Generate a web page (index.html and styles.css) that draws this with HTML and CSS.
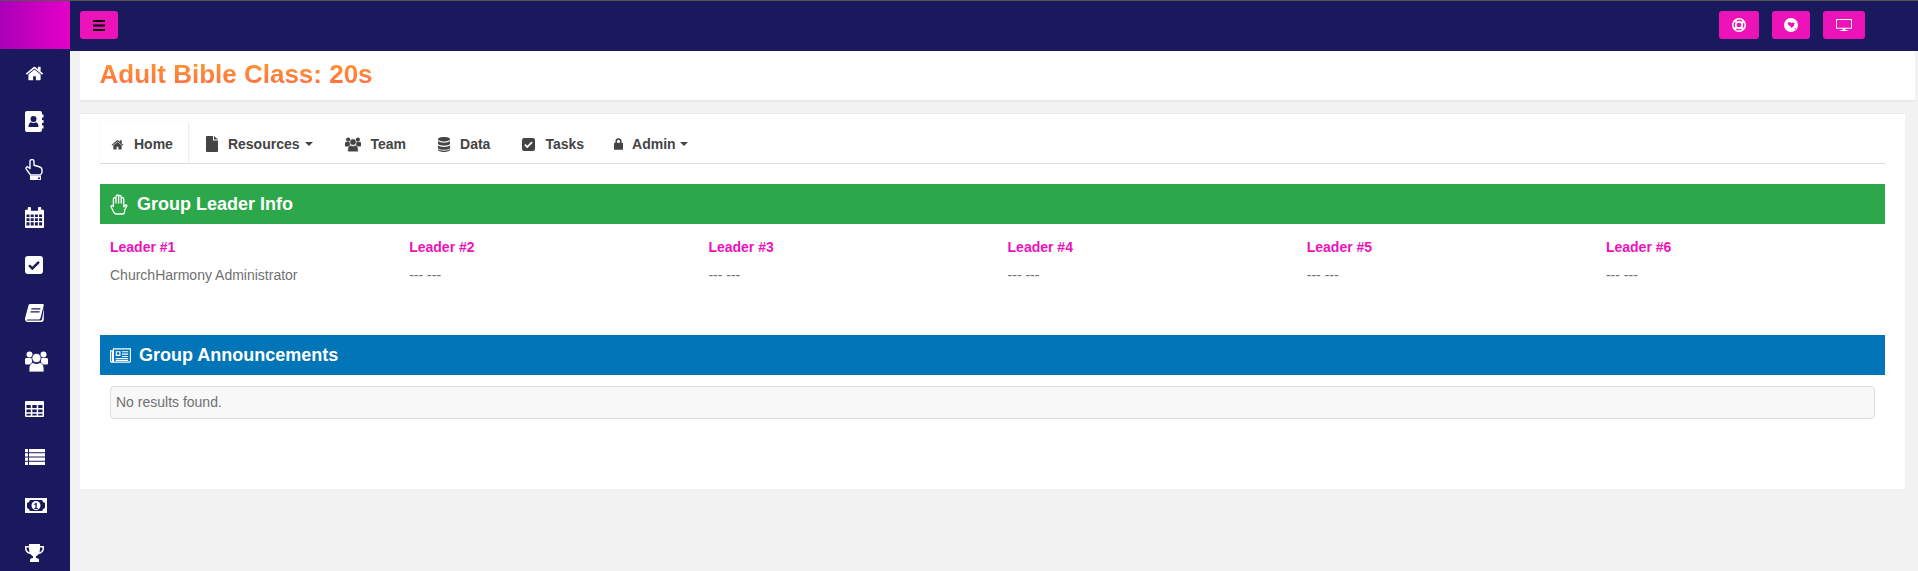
FILE: index.html
```html
<!DOCTYPE html>
<html lang="en">
<head>
<meta charset="utf-8">
<title>Adult Bible Class: 20s</title>
<link rel="stylesheet" href="styles.css">
</head>
<body>
<svg class="defs" width="0" height="0" aria-hidden="true">
  <symbol id="i-home" viewBox="0 128 1792 1440"><path d="M1472 992v480q0 26-19 45t-45 19h-384v-384h-256v384h-384q-26 0-45-19t-19-45v-480q0-1 .5-3t.5-3l575-474 575 474q1 2 1 6zm223-69l-62 74q-8 9-21 11h-3q-13 0-21-7l-692-577-692 577q-12 8-24 7-13-2-21-11l-62-74q-8-10-7-23.500t11-21.500l719-599q32-26 76-26t76 26l244 204v-195q0-14 9-23t23-9h192q14 0 23 9t9 23v408l219 182q10 8 11 21.500t-7 23.500z"/></symbol>
  <symbol id="i-file" viewBox="0 0 12 16"><path d="M0 1a1 1 0 011-1h6v4.500h5V15a1 1 0 01-1 1H1a1 1 0 01-1-1zM8 0l4 3.500H8z"/></symbol>
  <symbol id="i-users" viewBox="0 0 23 21"><circle cx="4.500" cy="3.500" r="3"/><circle cx="18.500" cy="3.500" r="3"/><path d="M0 8.500c0-1 .6-1.500 1.500-1.500h5.500v6.500H1.500C.6 13.500 0 13 0 12zM23 8.500c0-1-.6-1.500-1.500-1.500H16v6.500h5.500c.9 0 1.500-.5 1.500-1.500z"/><circle class="gap" cx="11.500" cy="7" r="4.600"/><path class="gap" d="M4 21v-4c0-3 2-5 4-5.500 2 1.500 5 1.500 7 0 2 .5 4 2.500 4 5.500v4z"/></symbol>
  <symbol id="i-database" viewBox="0 0 12 15"><path d="M6 0c3.300 0 6 .9 6 2.200S9.300 4.400 6 4.400 0 3.500 0 2.200 2.700 0 6 0zM0 4c1 1.100 3.500 1.700 6 1.700S11 5.100 12 4v2.600C12 7.800 9.300 8.700 6 8.700S0 7.800 0 6.600zM0 8.300c1 1.100 3.500 1.700 6 1.700s5-.6 6-1.700v2.400c0 1.200-2.700 2.100-6 2.100s-6-.9-6-2.100zM0 12c1 1.100 3.500 1.700 6 1.700s5-.6 6-1.700v.8C12 14 9.300 15 6 15s-6-1-6-2.200z"/></symbol>
  <symbol id="i-check" viewBox="0 0 18 18"><path fill-rule="evenodd" d="M3 0h12a3 3 0 013 3v12a3 3 0 01-3 3H3a3 3 0 01-3-3V3a3 3 0 013-3zm4.300 14.200l7.500-7.500-1.700-1.700-5.800 5.800-2.400-2.400-1.700 1.700z"/></symbol>
  <symbol id="i-lock" viewBox="0 0 10 13"><path fill-rule="evenodd" d="M1.600 5V3.400a3.400 3.400 0 016.800 0V5h.6a1 1 0 011 1v6a1 1 0 01-1 1H1a1 1 0 01-1-1V6a1 1 0 011-1zm1.700 0h3.400V3.400a1.700 1.700 0 00-3.400 0z"/></symbol>
  <symbol id="i-bars" viewBox="0 0 12 11"><path d="M0 0h12v2H0zM0 4.500h12v2H0zM0 9h12v2H0z"/></symbol>
  <symbol id="i-ring" viewBox="0 0 16 16"><circle cx="8" cy="8" r="8"/><circle class="cut-stroke" cx="8" cy="8" r="5.500" fill="none" stroke-width="1.500" stroke-dasharray="6 2.640" stroke-dashoffset="3"/><circle class="cut-fill" cx="8" cy="8" r="2.700"/></symbol>
  <symbol id="i-globe" viewBox="0 0 16 16"><circle cx="8" cy="8" r="8"/><path class="cut-fill" d="M4 5.500l3-1 1.200 1.400 2-1 2 1.300-1 2.800-2.700 2.500-1.300-2-2.200-1.500zM12 12l1.800-.6-.6 1.800z"/></symbol>
  <symbol id="i-desktop" viewBox="0 0 16 12"><path fill-rule="evenodd" d="M.5 0h15a.5.5 0 01.5.5v8.700a.5.5 0 01-.5.5H9.300v1.200h2.200v1H4.500v-1h2.200V9.700H.5A.5.5 0 010 9.200V.5A.5.5 0 01.5 0zm.5 1v7.700h14V1z"/></symbol>
  <symbol id="i-contact" viewBox="0 0 19 21"><path fill-rule="evenodd" d="M2 0h13a2 2 0 012 2v1.500h1.500v3H17V9h1.500v3H17v2.500h1.500v3H17V19a2 2 0 01-2 2H2a2 2 0 01-2-2V2a2 2 0 012-2zm6.500 5a3 3 0 100 6 3 3 0 000-6zM3.500 16h10c0-2.800-1-4.500-2.500-4.800-1.500 1-3.500 1-5 0C4.500 11.500 3.500 13.200 3.500 16z"/></symbol>
  <symbol id="i-point" viewBox="0 0 18 21"><path fill="none" stroke="currentColor" stroke-width="1.400" stroke-linejoin="round" d="M5 9.500v-7a2 2 0 014 0v3.800l4.500 1.200c2 .5 3.500 1.500 3.500 3.500v2.500l-1.500 2.500H5.500L1.300 10.200c-1-1.500.8-3 2-2z"/><path fill-rule="evenodd" d="M5 17h11v4H5zm9 1.200a1 1 0 100 2 1 1 0 000-2z"/></symbol>
  <symbol id="i-calendar" viewBox="0 0 19 21"><path fill-rule="evenodd" d="M3.500 0h1.800a.7.700 0 01.7.7v3.100H13V.7a.7.700 0 01.7-.7h1.800a.7.700 0 01.7.7v2h2c.4 0 .8.4.8.8v16.700c0 .4-.4.8-.8.8H.8c-.4 0-.8-.4-.8-.8V3.500c0-.4.4-.8.800-.8h2V.7a.7.700 0 01.7-.7zM1.500 7.500v2.500h3V7.500zm4.200 0v2.500h3V7.500zm4.200 0v2.500h3V7.500zm4.200 0v2.500h3V7.500zM1.500 11.300v2.700h3v-2.700zm4.200 0v2.700h3v-2.700zm4.200 0v2.700h3v-2.700zm4.200 0v2.700h3v-2.700zM1.500 15.300v3.200h3v-3.200zm4.200 0v3.200h3v-3.200zm4.200 0v3.200h3v-3.200zm4.200 0v3.200h3v-3.200z"/></symbol>
  <symbol id="i-book" viewBox="0 0 19 18"><path fill-rule="evenodd" d="M5 0h12.500c1 0 1.500.8 1.200 1.800L15.500 14c-.3 1-1 1.500-2 1.500H3c-1 0-1.500.7-1.300 1h14c.6 0 1-.4 1.200-1L19 4.500l-.3 11.500c-.3 1.200-1 2-2.200 2H2.500C.8 18-.4 16 .1 14L3.300 2C3.600.8 4 0 5 0zm1.500 4.200l-.3 1.200h9l.3-1.200zm-.8 3l-.3 1.200h9l.3-1.200z"/></symbol>
  <symbol id="i-table" viewBox="0 0 19 16"><path fill-rule="evenodd" d="M1 0h17a1 1 0 011 1v14a1 1 0 01-1 1H1a1 1 0 01-1-1V1a1 1 0 011-1zm.5 4v3h4.300V4zm5.800 0v3h4.400V4zm5.900 0v3h4.300V4zM1.500 8.500v2.800h4.300V8.500zm5.800 0v2.800h4.400V8.500zm5.900 0v2.800h4.300V8.500zM1.500 12.700v1.800h4.300v-1.800zm5.800 0v1.800h4.400v-1.800zm5.900 0v1.800h4.300v-1.800z"/></symbol>
  <symbol id="i-list" viewBox="0 0 20 16"><path fill-rule="evenodd" d="M0 0h3v3.300H0zM4 0h16v3.300H4zM0 4.300h3v3.200H0zM4 4.300h16v3.200H4zM0 8.500h3v3.200H0zM4 8.500h16v3.200H4zM0 12.700h3V16H0zM4 12.700h16V16H4z"/></symbol>
  <symbol id="i-money" viewBox="0 0 22 15"><path fill-rule="evenodd" d="M0 0h22v15H0zM5 2C4.500 3.500 3.500 4.500 2 5v5c1.500.5 2.500 1.500 3 3h12c.5-1.500 1.500-2.500 3-3V5c-1.500-.5-2.500-1.500-3-3zM11 3a4.500 4.500 0 110 9 4.500 4.500 0 010-9zM10.800 4.800L9 6.300l.7.8.7-.6V10H9.300v1h3.500v-1h-1.100V4.800z"/></symbol>
  <symbol id="i-trophy" viewBox="0 0 19 18"><path fill-rule="evenodd" d="M4 0h11v2h4v2.500c0 3-2.500 5.200-5.300 5.500-.7 1-1.500 1.700-2.700 2.200V14c1.800 0 3 .7 3 2v2H5v-2c0-1.300 1.200-2 3-2v-1.800c-1.200-.5-2-1.200-2.700-2.200C2.500 9.700 0 7.500 0 4.500V2h4zM1.500 3.500v1c0 1.800 1.300 3.200 3 3.800C4.200 7 4 5.300 4 3.500zm16 0H15c0 1.800-.2 3.500-.5 4.800 1.700-.6 3-2 3-3.800z"/></symbol>
  <symbol id="i-hand" viewBox="0 0 18 21"><path fill="none" stroke="currentColor" stroke-width="1.300" stroke-linejoin="round" stroke-linecap="round" d="M3.400 11V5a1.300 1.300 0 012.600 0v4M6 9V2.300a1.300 1.300 0 012.600 0V9M8.600 9V2.800a1.300 1.300 0 012.600 0V9M11.200 9V5a1.300 1.300 0 012.600 0v7c0 .8.100 1.200.6.6l.8-1.200c.8-1.200 2.100 0 1.400 1.100l-2 3.500v1.800c0 1.300-.9 2.200-2.200 2.200H6.500c-1.300 0-2.200-.7-2.700-1.800l-2.500-5c-.7-1.300.7-2.300 1.600-1.300l.5.6"/></symbol>
  <symbol id="i-news" viewBox="0 0 22 15"><path fill-rule="evenodd" d="M3 0h19v13.500a1.500 1.500 0 01-1.500 1.500H1.500A1.500 1.500 0 010 13.500V2h3zm1.200 1.200v12.600H20.800V1.200zM1.200 3.200v10.300a.3.300 0 00.3.300c.4 0 .5-.2.500-.5V3.200zM6 3h5v5H6zm1.200 1.200v2.600h2.600V4.200zM12.500 3H19v1.200h-6.500zM12.500 5.500H19v1.200h-6.500zM12.500 8H19v1.200h-6.500zM6 10.200h13v1.200H6zM6 12.300h13v.9H6z"/></symbol>
</svg>

<div class="app">
  <aside class="sidebar">
    <div class="logo"></div>
    <nav class="side-nav">
      <a class="side-item"><svg class="si w19 h16"><use href="#i-home"/></svg></a>
      <a class="side-item"><svg class="si w19 h21"><use href="#i-contact"/></svg></a>
      <a class="side-item"><svg class="si w18 h21"><use href="#i-point"/></svg></a>
      <a class="side-item"><svg class="si w19 h21"><use href="#i-calendar"/></svg></a>
      <a class="side-item"><svg class="si w18 h18"><use href="#i-check"/></svg></a>
      <a class="side-item"><svg class="si w19 h18"><use href="#i-book"/></svg></a>
      <a class="side-item"><svg class="si w23 h21"><use href="#i-users"/></svg></a>
      <a class="side-item"><svg class="si w19 h16"><use href="#i-table"/></svg></a>
      <a class="side-item"><svg class="si w20 h16"><use href="#i-list"/></svg></a>
      <a class="side-item"><svg class="si w22 h15"><use href="#i-money"/></svg></a>
      <a class="side-item"><svg class="si w19 h18"><use href="#i-trophy"/></svg></a>
    </nav>
  </aside>

  <div class="main">
    <header class="topbar">
      <button class="btn btn-menu"><svg class="bars"><use href="#i-bars"/></svg></button>
      <div class="top-actions">
        <button class="btn btn-ring"><svg class="ti"><use href="#i-ring"/></svg></button>
        <button class="btn btn-globe"><svg class="ti"><use href="#i-globe"/></svg></button>
        <button class="btn btn-desk"><svg class="ti-d"><use href="#i-desktop"/></svg></button>
      </div>
    </header>

    <div class="page-head"><h1 class="page-title">Adult Bible Class: 20s</h1></div>

    <section class="panel">
      <ul class="tabs">
        <li class="tab tab-active"><svg class="ni w13 h11"><use href="#i-home"/></svg><span>Home</span></li>
        <li class="tab"><svg class="ni w12 h16"><use href="#i-file"/></svg><span>Resources</span><i class="caret"></i></li>
        <li class="tab"><svg class="ni w16 h15"><use href="#i-users"/></svg><span>Team</span></li>
        <li class="tab"><svg class="ni w12 h15"><use href="#i-database"/></svg><span>Data</span></li>
        <li class="tab"><svg class="ni w13 h13"><use href="#i-check"/></svg><span>Tasks</span></li>
        <li class="tab tab-admin"><svg class="ni w9 h12"><use href="#i-lock"/></svg><span>Admin</span><i class="caret"></i></li>
      </ul>

      <h2 class="bar bar-green"><svg class="bi-hand"><use href="#i-hand"/></svg>Group Leader Info</h2>
      <div class="leaders">
        <div class="leader"><div class="leader-label">Leader #1</div><div class="leader-name">ChurchHarmony Administrator</div></div>
        <div class="leader"><div class="leader-label">Leader #2</div><div class="leader-name">--- ---</div></div>
        <div class="leader"><div class="leader-label">Leader #3</div><div class="leader-name">--- ---</div></div>
        <div class="leader"><div class="leader-label">Leader #4</div><div class="leader-name">--- ---</div></div>
        <div class="leader"><div class="leader-label">Leader #5</div><div class="leader-name">--- ---</div></div>
        <div class="leader"><div class="leader-label">Leader #6</div><div class="leader-name">--- ---</div></div>
      </div>

      <h2 class="bar bar-blue"><svg class="bi-news"><use href="#i-news"/></svg>Group Announcements</h2>
      <div class="well">No results found.</div>
    </section>
  </div>
</div>
</body>
</html>
```
FILE: styles.css
```css
* { box-sizing: border-box; }
html, body { margin: 0; }
body {
  height: 571px;
  overflow: hidden;
  background: #f2f2f2;
  color: #707070;
  font: 14px "Liberation Sans", Arial, sans-serif;
}
.defs { position: absolute; }
svg { fill: currentColor; display: block; flex: none; }
.gap { stroke: var(--gap); stroke-width: .8px; }
.cut-fill { fill: #ec13b9; }
.cut-stroke { stroke: #ec13b9; }
.si { --gap: #1a195e; }
.ni { --gap: #fff; }

.app {
  display: flex;
  height: 571px;
  border-top: 1px solid #555;
}

.sidebar {
  width: 70px;
  flex: none;
  background: #1a195e;
  color: #fff;
  overflow: hidden;
}
.logo {
  height: 48px;
  background: linear-gradient(90deg, #aa00b8, #e600c6);
}
.side-item {
  display: flex;
  align-items: center;
  height: 48px;
  padding-left: 25px;
}
.w9 { width: 9px; } .w12 { width: 12px; } .w13 { width: 13px; } .w16 { width: 16px; }
.w18 { width: 18px; } .w19 { width: 19px; } .w20 { width: 20px; } .w22 { width: 22px; } .w23 { width: 23px; }
.h11 { height: 11px; } .h12 { height: 12px; } .h13 { height: 13px; } .h15 { height: 15px; } .h16 { height: 16px; }
.h18 { height: 18px; } .h21 { height: 21px; }

.main { flex: 1; min-width: 0; }

.topbar {
  display: flex;
  justify-content: space-between;
  height: 50px;
  padding: 10px 0 0 10px;
  background: #1a195e;
}
.top-actions { display: flex; gap: 13px; padding-right: 53px; }
.btn {
  display: flex;
  align-items: center;
  justify-content: center;
  height: 28px;
  padding: 0;
  border: 0;
  border-radius: 3px;
  background: #ec13b9;
  color: #fff;
}
.btn-menu { width: 38px; color: #000; }
.btn-ring { width: 40px; }
.btn-globe { width: 38px; }
.btn-desk { width: 42px; }
.bars { width: 12px; height: 11px; }
.ti { width: 14px; height: 14px; }
.ti-d { width: 16px; height: 12px; }

.page-head {
  display: flex;
  align-items: center;
  height: 51px;
  margin: 0 3px 11px 10px;
  padding: 0 0 3px 19.5px;
  background: #fff;
  border-bottom: 2px solid #e7e9ec;
}
.page-title {
  margin: 0;
  font-size: 26px;
  font-weight: 700;
  line-height: 32px;
  color: #ff7f35;
  background: linear-gradient(180deg, #ff9a2a, #ff6a48);
  -webkit-background-clip: text;
  background-clip: text;
  -webkit-text-fill-color: transparent;
}

.panel {
  height: 376px;
  margin: 0 13px 0 10px;
  padding: 8px 20px 0;
  background: #fff;
  border-top: 1px solid #e7e9ec;
}

.tabs {
  display: flex;
  height: 42px;
  margin: 0 0 20px;
  padding: 0;
  list-style: none;
  border-bottom: 1px solid #ddd;
  color: #444;
  font-size: 14px;
  font-weight: 700;
}
.tab {
  display: flex;
  align-items: center;
  gap: 10px;
  padding: 3px 16px 0;
}
.tab-active {
  padding: 3px 15px 0 11px;
  margin-right: 1px;
  border-right: 1px solid #eee;
  box-shadow: 0 0 2px rgba(0, 0, 0, .06);
}
.tab-admin { margin-left: -2px; gap: 9px; }
.caret {
  width: 0;
  height: 0;
  margin-left: -5px;
  border: 4px solid transparent;
  border-top-color: #444;
  border-bottom: 0;
}

.bar {
  display: flex;
  align-items: center;
  height: 40px;
  margin: 0;
  padding-left: 10px;
  color: #fff;
  font-size: 18px;
  font-weight: 700;
}
.bar-green { background: #2ca84a; }
.bar-blue { background: #0274b8; margin-top: 50px; }
.bi-hand { width: 18px; height: 21px; margin-right: 9px; }
.bi-news { width: 21px; height: 15px; margin-right: 8px; }

.leaders {
  display: grid;
  grid-template-columns: repeat(6, 299.2px);
  padding-top: 14px;
}
.leader { padding-left: 10px; }
.leader-label {
  height: 28px;
  line-height: 18px;
  color: #ee11bb;
  font-weight: 700;
}
.leader-name { height: 19px; line-height: 18px; }

.well {
  height: 33px;
  margin: 11px 10px 0;
  padding: 0 5px;
  line-height: 30px;
  background: #f8f8f8;
  border: 1px solid #ddd;
  border-radius: 4px;
}
```
